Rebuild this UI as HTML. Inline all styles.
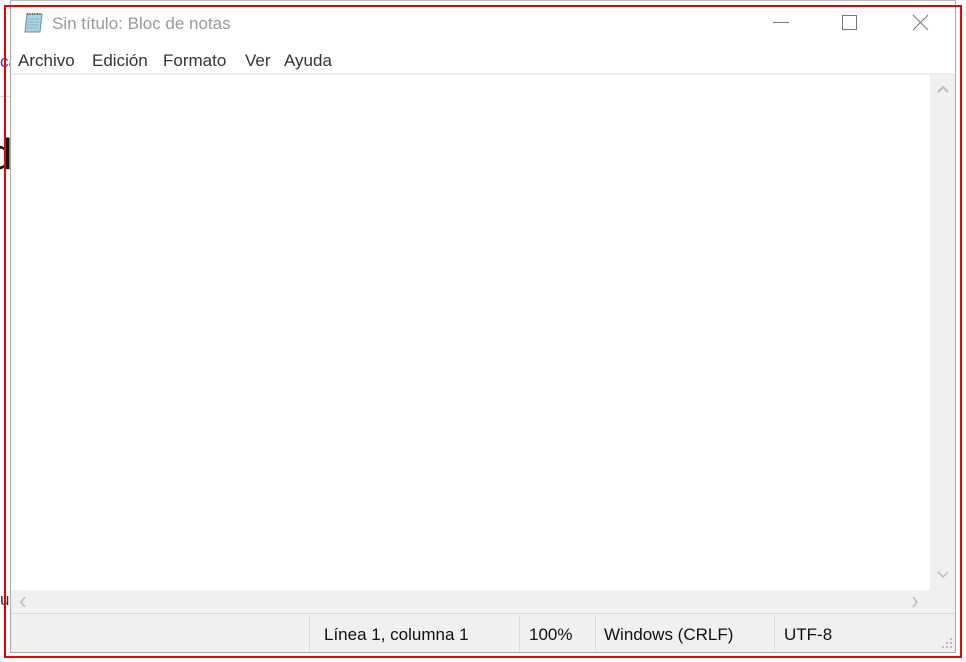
<!DOCTYPE html>
<html><head><meta charset="utf-8"><style>
*{margin:0;padding:0;box-sizing:border-box}
body{width:966px;height:662px;background:#fff;position:relative;overflow:hidden;font-family:"Liberation Sans","DejaVu Sans",sans-serif}
.abs{position:absolute}
.win{left:10px;top:0;width:946px;height:653px;border:1px solid #aaa;border-top:1px solid #bbb;background:#fff}
.title{left:52px;top:14px;font-size:17px;color:#999}
.menu{top:51px;font-size:17px;color:#333}
.sep{background:#d9d9d9;width:1px;top:616px;height:35px}
.st{top:625px;font-size:17px;color:#111}
</style></head><body>
<div class="abs" style="left:0;top:52px;font-size:17px;color:#33c">ca</div>
<div class="abs" style="left:-12px;top:130px;font-size:44px;color:#111">d</div>
<div class="abs" style="left:0;top:96px;width:10px;height:1px;background:#ddd"></div>
<div class="abs" style="left:0;top:590px;font-size:17px;color:#333">u</div>
<div class="abs win"></div>
<svg class="abs" style="left:22px;top:10px" width="26" height="24" viewBox="0 0 26 24">
<path d="M5 4 L20 4 L18 22 L3 22 Z" fill="#a9d4e8" stroke="#6a8fa0"/>
<path d="M5 4 L20 4" stroke="#567" stroke-dasharray="1 1.5" stroke-width="2"/>
<path d="M6 9h11M6 12h11M5 15h11M5 18h11" stroke="#7ab" stroke-width="0.8"/>
</svg>
<div class="abs title">Sin título: Bloc de notas</div>
<div class="abs" style="left:773px;top:22px;width:16px;height:1px;background:#777"></div>
<div class="abs" style="left:842px;top:15px;width:15px;height:15px;border:1px solid #777"></div>
<svg class="abs" style="left:912px;top:14px" width="17" height="17"><path d="M1 1L16 16M16 1L1 16" stroke="#777" stroke-width="1"/></svg>
<div class="abs menu" style="left:18px">Archivo</div>
<div class="abs menu" style="left:92px">Edición</div>
<div class="abs menu" style="left:163px">Formato</div>
<div class="abs menu" style="left:245px">Ver</div>
<div class="abs menu" style="left:284px">Ayuda</div>
<div class="abs" style="left:11px;top:73px;width:944px;height:2px;background:#eee"></div>
<div class="abs" style="left:930px;top:75px;width:25px;height:515px;background:#f0f0f0"></div>
<div class="abs" style="left:11px;top:590px;width:944px;height:23px;background:#f0f0f0"></div>
<svg class="abs" style="left:936px;top:84px" width="14" height="10"><path d="M2 8L7 3L12 8" stroke="#bbb" stroke-width="2" fill="none"/></svg>
<svg class="abs" style="left:936px;top:570px" width="14" height="10"><path d="M2 2L7 7L12 2" stroke="#bbb" stroke-width="1.5" fill="none"/></svg>
<svg class="abs" style="left:18px;top:595px" width="10" height="14"><path d="M7 2L3 7L7 12" stroke="#bbb" stroke-width="1.5" fill="none"/></svg>
<svg class="abs" style="left:910px;top:595px" width="10" height="14"><path d="M3 2L7 7L3 12" stroke="#bbb" stroke-width="1.5" fill="none"/></svg>
<div class="abs" style="left:11px;top:613px;width:944px;height:1px;background:#d9d9d9"></div>
<div class="abs" style="left:11px;top:614px;width:944px;height:38px;background:#f0f0f0"></div>
<div class="abs sep" style="left:309px"></div>
<div class="abs sep" style="left:519px"></div>
<div class="abs sep" style="left:595px"></div>
<div class="abs sep" style="left:774px"></div>
<div class="abs st" style="left:324px">Línea 1, columna 1</div>
<div class="abs st" style="left:529px">100%</div>
<div class="abs st" style="left:604px">Windows (CRLF)</div>
<div class="abs st" style="left:784px">UTF-8</div>
<svg class="abs" style="left:942px;top:638px" width="12" height="12"><g fill="#bbb"><rect x="8" y="0" width="2" height="2"/><rect x="4" y="4" width="2" height="2"/><rect x="8" y="4" width="2" height="2"/><rect x="0" y="8" width="2" height="2"/><rect x="4" y="8" width="2" height="2"/><rect x="8" y="8" width="2" height="2"/></g></svg>
<div class="abs" style="left:4px;top:5px;width:958px;height:653px;border:2px solid #e00"></div>
</body></html>
